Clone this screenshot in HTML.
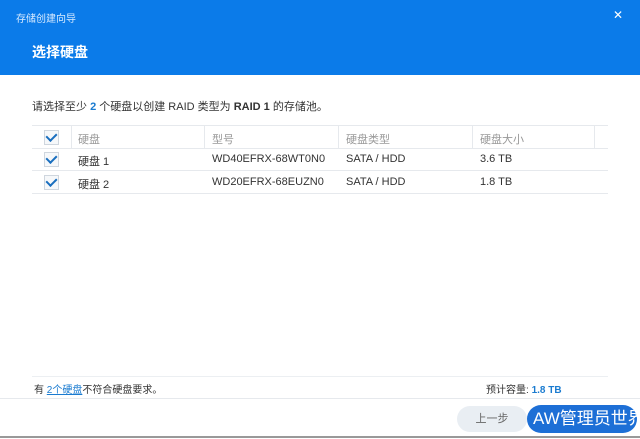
<!DOCTYPE html><html><head><meta charset="utf-8"><style>
body{margin:0;width:640px;height:438px;overflow:hidden;font-family:"Liberation Sans","Noto Sans CJK SC",sans-serif;background:#fff;position:relative;color:#333}
.hd{position:absolute;left:0;top:0;width:640px;height:75px;background:#0b7be9}
.t1{position:absolute;left:16px;top:10px;font-size:10px;color:#d8ebff}
.t2{position:absolute;left:32px;top:42px;font-size:14px;color:#fff;font-weight:bold}
.x{position:absolute;right:17px;top:8px;color:#fff;font-size:12px}
.a{position:absolute;font-size:11px;white-space:nowrap}
.row{position:absolute;left:32px;width:576px;border-bottom:1px solid #e6e9ed}
.cb{position:absolute;left:12px;width:13px;height:13px;border:1px solid #cfd6de;background:#f6f8fa}
.cb:after{content:"";position:absolute;left:3px;top:0px;width:5px;height:8px;border:solid #1a6fbf;border-width:0 2px 2px 0;transform:rotate(45deg)}
</style></head><body>
<div class="hd"><div class="t1">存储创建向导</div><div class="t2">选择硬盘</div><div class="x">✕</div></div>
<div class="a" style="left:32px;top:98px">请选择至少 <b style="color:#1a7bd0">2</b> 个硬盘以创建 RAID 类型为 <b>RAID 1</b> 的存储池。</div>
<div class="row" style="top:125px;height:22px;border-top:1px solid #e6e9ed"><div class="cb" style="top:4px"></div>
<div style="position:absolute;left:39px;top:0;height:22px;border-left:1px solid #e6e9ed"></div>
<div style="position:absolute;left:172px;top:0;height:22px;border-left:1px solid #e6e9ed"></div>
<div style="position:absolute;left:306px;top:0;height:22px;border-left:1px solid #e6e9ed"></div>
<div style="position:absolute;left:440px;top:0;height:22px;border-left:1px solid #e6e9ed"></div>
<div style="position:absolute;left:562px;top:0;height:22px;border-left:1px solid #e6e9ed"></div>
<span class="a" style="left:46px;top:5px;color:#999">硬盘</span><span class="a" style="left:180px;top:5px;color:#999">型号</span><span class="a" style="left:314px;top:5px;color:#999">硬盘类型</span><span class="a" style="left:448px;top:5px;color:#999">硬盘大小</span></div>
<div class="row" style="top:148px;height:22px"><div class="cb" style="top:4px"></div><span class="a" style="left:46px;top:5px">硬盘 1</span><span class="a" style="left:180px;top:5px">WD40EFRX-68WT0N0</span><span class="a" style="left:314px;top:5px">SATA / HDD</span><span class="a" style="left:448px;top:5px">3.6 TB</span></div>
<div class="row" style="top:171px;height:22px"><div class="cb" style="top:4px"></div><span class="a" style="left:46px;top:5px">硬盘 2</span><span class="a" style="left:180px;top:5px">WD20EFRX-68EUZN0</span><span class="a" style="left:314px;top:5px">SATA / HDD</span><span class="a" style="left:448px;top:5px">1.8 TB</span></div>
<div style="position:absolute;left:32px;top:376px;width:576px;border-top:1px solid #eceff2"></div>
<div class="a" style="left:34px;top:381px;font-size:10px">有 <u style="color:#1a7bd0">2个硬盘</u>不符合硬盘要求。</div>
<div class="a" style="left:486px;top:381px;font-size:10px">预计容量: <b style="color:#1a7bd0">1.8 TB</b></div>
<div style="position:absolute;left:0;top:398px;width:640px;height:40px;border-top:1px solid #e6e9ed;background:#fff"></div>
<div style="position:absolute;left:457px;top:406px;width:70px;height:26px;border-radius:13px;background:#e9eef3;color:#666;font-size:11px;text-align:center;line-height:26px">上一步</div>
<div style="position:absolute;left:527px;top:405px;width:110px;height:28px;border-radius:14px;background:#1d6fd6;color:#fff;font-size:17px;line-height:28px;padding-left:6px;box-sizing:border-box;white-space:nowrap;overflow:hidden">AW管理员世界</div>
<div style="position:absolute;left:0;top:436px;width:640px;height:2px;background:#999"></div>
</body></html>
